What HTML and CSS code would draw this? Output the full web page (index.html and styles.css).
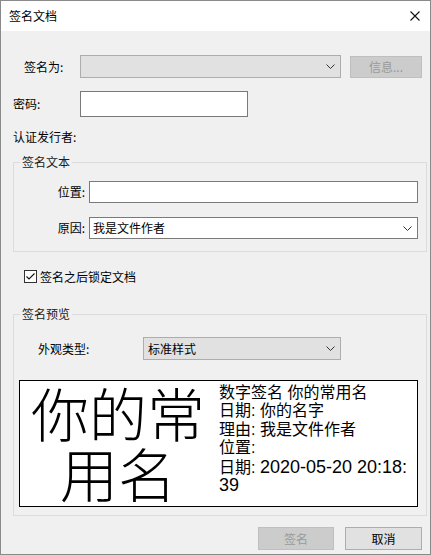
FILE: index.html
```html
<!DOCTYPE html>
<html lang="zh">
<head>
<meta charset="utf-8">
<title>签名文档</title>
<link rel="stylesheet" href="styles.css">
</head>
<body>
<div class="window">
  <div class="titlebar">
    <span class="title">签名文档</span>
    <svg class="close" width="10" height="10" viewBox="0 0 10 10"><path d="M0.5 0.5L9.5 9.5M9.5 0.5L0.5 9.5"/></svg>
  </div>
  <div class="content">
    <div class="row row-signas">
      <span class="lbl lbl-signas">签名为:</span>
      <div class="combo combo-gray combo-signas">
        <span class="combo-text"></span>
        <svg class="chev" width="9" height="5" viewBox="0 0 9 5"><path d="M0.5 0.5L4.5 4.5L8.5 0.5"/></svg>
      </div>
      <button class="btn btn-disabled btn-info">信息...</button>
    </div>
    <div class="row row-pwd">
      <span class="lbl">密码:</span>
      <div class="input input-pwd"></div>
    </div>
    <div class="row-issuer">认证发行者:</div>

    <fieldset class="group group-text">
      <legend>签名文本</legend>
      <div class="frow">
        <span class="flbl">位置:</span>
        <div class="input input-wide"></div>
      </div>
      <div class="frow frow-2">
        <span class="flbl">原因:</span>
        <div class="combo combo-white input-wide">
          <span class="combo-text">我是文件作者</span>
          <svg class="chev" width="9" height="5" viewBox="0 0 9 5"><path d="M0.5 0.5L4.5 4.5L8.5 0.5"/></svg>
        </div>
      </div>
    </fieldset>

    <div class="check-row">
      <span class="checkbox"><svg width="11" height="11" viewBox="0 0 11 11"><path d="M1.5 5.5L4 8L9.5 2.5"/></svg></span>
      <span class="check-label">签名之后锁定文档</span>
    </div>

    <fieldset class="group group-preview">
      <legend>签名预览</legend>
      <div class="frow">
        <span class="plbl">外观类型:</span>
        <div class="combo combo-gray combo-style">
          <span class="combo-text">标准样式</span>
          <svg class="chev" width="9" height="5" viewBox="0 0 9 5"><path d="M0.5 0.5L4.5 4.5L8.5 0.5"/></svg>
        </div>
      </div>
      <div class="preview">
        <div class="preview-name">你的常<br>用名</div>
        <div class="preview-info">
          <div class="pline">数字签名 你的常用名</div>
          <div class="pline">日期: 你的名字</div>
          <div class="pline">理由: 我是文件作者</div>
          <div class="pline">位置:</div>
          <div class="pline">日期: <span class="lat">2020-05-20 20:18:</span></div>
          <div class="pline"><span class="lat">39</span></div>
        </div>
      </div>
    </fieldset>

    <div class="buttons">
      <button class="btn btn-disabled btn-sign">签名</button>
      <button class="btn btn-cancel">取消</button>
    </div>
  </div>
</div>
</body>
</html>
```
FILE: styles.css
```css
* { box-sizing: border-box; }
html, body { margin: 0; padding: 0; }
body {
  font-family: "Noto Sans CJK SC", "Liberation Sans", sans-serif;
  font-size: 12px;
  color: #000;
  background: #fff;
}
.window {
  width: 431px;
  height: 555px;
  border: 1px solid #8a8a8a;
  background: #f0f0f0;
  display: flex;
  flex-direction: column;
}
.titlebar {
  height: 30px;
  flex: none;
  background: #fff;
  display: flex;
  align-items: center;
  justify-content: space-between;
  padding: 0 10px 0 8px;
}
.title { font-size: 12px; line-height: 16px; }
.close path { stroke: #111; stroke-width: 1.1; fill: none; }

.content {
  flex: 1;
  display: flex;
  flex-direction: column;
  padding: 0 8px 0 12px;
}
.row { display: flex; align-items: center; }
.row-signas { margin-top: 24px; height: 23px; }
.lbl { width: 67px; line-height: 16px; }
.lbl-signas { padding-left: 11px; }

.combo {
  height: 23px;
  display: flex;
  align-items: center;
  justify-content: space-between;
  padding: 0 5px 0 4px;
  line-height: 16px;
}
.combo-gray { background: #e1e1e1; border: 1px solid #adadad; }
.combo-white { background: #fff; border: 1px solid #7a7a7a; }
.combo-signas { width: 261px; }
.chev path { stroke: #333; stroke-width: 1; fill: none; }

.btn {
  font-family: "Noto Sans CJK SC", "Liberation Sans", sans-serif;
  font-size: 12px;
  line-height: 16px;
  height: 23px;
  padding: 0;
  margin: 0;
}
.btn-disabled { background: #cccccc; border: 1px solid #bfbfbf; color: #9a9a9a; }
.btn-info { width: 72px; height: 22px; margin-left: 9px; margin-top: 1px; }

.input { background: #fff; border: 1px solid #7a7a7a; }
.row-pwd { margin-top: 13px; }
.input-pwd { width: 168px; height: 26px; }
.row-issuer { margin-top: 12px; height: 16px; line-height: 16px; }

.group {
  margin: 0;
  width: 414px;
  border: 1px solid #dcdcdc;
  min-width: 0;
}
.group legend {
  padding: 0 2px;
  margin-left: 6px;
  line-height: 16px;
  font-size: 12px;
  color: #1a1a1a;
}
.group-text { margin-top: 9px; padding: 11px 0 12px 0; }
.frow { display: flex; align-items: center; }
.frow-2 { margin-top: 14px; }
.flbl { width: 75px; padding-right: 4px; text-align: right; line-height: 16px; }
.input-wide { width: 329px; height: 22px; }
.combo-white.input-wide { padding-left: 3px; padding-right: 5px; }

.check-row { margin-top: 18px; margin-left: 11px; height: 13px; display: flex; align-items: center; }
.checkbox {
  width: 13px; height: 13px;
  border: 1px solid #333;
  background: #fff;
  display: flex;
}
.checkbox path { stroke: #111; stroke-width: 1.1; fill: none; }
.check-label { margin-left: 3px; line-height: 16px; }

.group-preview { margin-top: 23px; padding: 15px 0 8px 0; }
.plbl { width: 129px; padding-left: 24px; line-height: 16px; }
.combo-style { width: 198px; }

.preview {
  margin-top: 20px;
  margin-left: 5px;
  width: 399px;
  height: 127px;
  border: 1px solid #000;
  background: #fff;
  display: flex;
}
.preview-name {
  width: 196px;
  padding-top: 1px;
  text-align: center;
  font-size: 58px;
  line-height: 60px;
  font-weight: 300;
  color: #000;
}
.preview-info {
  padding-top: 3px;
  padding-left: 3px;
  font-family: "Liberation Sans", "Noto Sans CJK SC", sans-serif;
  font-size: 16px;
}
.pline { height: 18.4px; line-height: 18.4px; white-space: nowrap; }
.lat { font-size: 18px; line-height: 18px; }

.buttons {
  margin-top: 11px;
  display: flex;
  justify-content: flex-end;
  gap: 11px;
}
.btn-sign { width: 76px; }
.btn-cancel { width: 77px; background: #e1e1e1; border: 1px solid #adadad; color: #000; }
```
